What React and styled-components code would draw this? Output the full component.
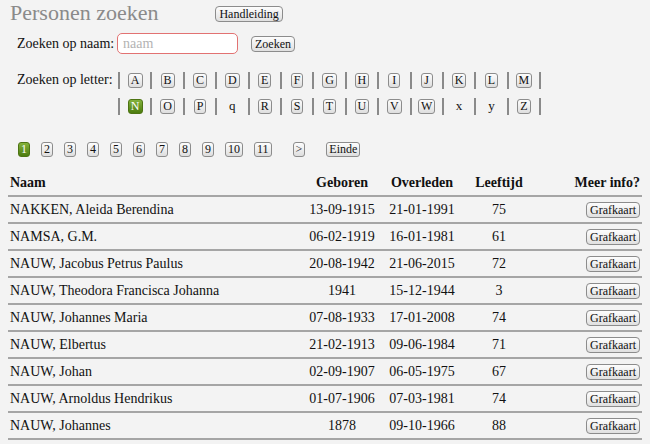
import styled, { createGlobalStyle, css } from "styled-components";

const GlobalStyle = createGlobalStyle`
  html, body {
    margin: 0;
    overflow: hidden;
  }
  body {
    padding: 0 8px;
    background: #f3f3f3;
    color: #111;
    font-family: "Liberation Serif", "Times New Roman", serif;
    font-size: 14px;
  }
`;

const letters1 = ["A", "B", "C", "D", "E", "F", "G", "H", "I", "J", "K", "L", "M"];
const letters2 = ["N", "O", "P", "q", "R", "S", "T", "U", "V", "W", "x", "y", "Z"];
const empty = ["q", "x", "y"];

const people = [
  ["NAKKEN, Aleida Berendina", "13-09-1915", "21-01-1991", "75"],
  ["NAMSA, G.M.", "06-02-1919", "16-01-1981", "61"],
  ["NAUW, Jacobus Petrus Paulus", "20-08-1942", "21-06-2015", "72"],
  ["NAUW, Theodora Francisca Johanna", "1941", "15-12-1944", "3"],
  ["NAUW, Johannes Maria", "07-08-1933", "17-01-2008", "74"],
  ["NAUW, Elbertus", "21-02-1913", "09-06-1984", "71"],
  ["NAUW, Johan", "02-09-1907", "06-05-1975", "67"],
  ["NAUW, Arnoldus Hendrikus", "01-07-1906", "07-03-1981", "74"],
  ["NAUW, Johannes", "1878", "09-10-1966", "88"],
];

export default function App() {
  return (
    <>
      <GlobalStyle />
      <TitleBar>
        <Title>Personen zoeken</Title>
        <Knop $top={6}>Handleiding</Knop>
      </TitleBar>

      <Zoekform>
        <Label>Zoeken op naam:</Label>
        <NameRow>
          <NaamInput placeholder="naam" />
          <Knop>Zoeken</Knop>
        </NameRow>

        <Label $tall>Zoeken op letter:</Label>
        <LetterRows>
          {[letters1, letters2].map((row, i) => (
            <LetterRow key={i}>
              {row.map((l) => (
                <Slot key={l}>
                  <Sep />
                  <Cell>
                    {empty.includes(l) ? (
                      <Plain>{l}</Plain>
                    ) : (
                      <Mini $active={l === "N"}>{l}</Mini>
                    )}
                  </Cell>
                </Slot>
              ))}
              <Sep />
            </LetterRow>
          ))}
        </LetterRows>
      </Zoekform>

      <Pages>
        {["1", "2", "3", "4", "5", "6", "7", "8", "9", "10", "11"].map((p) => (
          <Mini key={p} $active={p === "1"}>
            {p}
          </Mini>
        ))}
        <Mini $wide>&gt;</Mini>
        <Mini $wide>Einde</Mini>
      </Pages>

      <Tabel>
        <colgroup>
          <col style={{ width: 299 }} />
          <col style={{ width: 70 }} />
          <col style={{ width: 90 }} />
          <col style={{ width: 64 }} />
          <col />
        </colgroup>
        <thead>
          <tr>
            <Th>Naam</Th>
            <Th $align="center">Geboren</Th>
            <Th $align="center">Overleden</Th>
            <Th $align="center">Leeftijd</Th>
            <Th $align="right">Meer info?</Th>
          </tr>
        </thead>
        <tbody>
          {people.map(([naam, geb, ovl, lft]) => (
            <tr key={naam}>
              <Td>{naam}</Td>
              <Td $align="center">{geb}</Td>
              <Td $align="center">{ovl}</Td>
              <Td $align="center">{lft}</Td>
              <Td $align="right">
                <Knop>Grafkaart</Knop>
              </Td>
            </tr>
          ))}
        </tbody>
      </Tabel>
    </>
  );
}

const TitleBar = styled.div`
  display: flex;
  align-items: flex-start;
  gap: 57px;
  height: 22px;
`;

const Title = styled.h1`
  margin: 0 0 0 2px;
  font-size: 22px;
  line-height: 25px;
  font-weight: normal;
  color: #8a8a8a;
`;

const Knop = styled.button`
  margin-top: ${(p) => p.$top || 0}px;
  height: 16px;
  padding: 0 3px;
  font-family: "Liberation Serif", "Times New Roman", serif;
  font-size: 12px;
  line-height: 14px;
  color: #111;
  background: linear-gradient(#fdfdfd, #e0e0e0);
  border: 1px solid #8c8c8c;
  border-radius: 4px;
`;

const Zoekform = styled.div`
  display: grid;
  grid-template-columns: 100px auto;
  row-gap: 13px;
  margin-top: 11px;
  padding-left: 9px;
`;

const Label = styled.div`
  line-height: ${(p) => (p.$tall ? 26 : 21)}px;
`;

const NameRow = styled.div`
  display: flex;
  align-items: center;
  gap: 13px;
  height: 21px;
`;

const NaamInput = styled.input`
  box-sizing: border-box;
  width: 121px;
  height: 21px;
  padding: 0 5px;
  font-family: "Liberation Serif", "Times New Roman", serif;
  font-size: 14px;
  background: #fff;
  border: 1.5px solid #e27272;
  border-radius: 5px;
  outline: none;
  &::placeholder {
    color: #b3b3b3;
  }
`;

const LetterRows = styled.div`
  display: flex;
  flex-direction: column;
`;

const LetterRow = styled.div`
  display: flex;
  align-items: center;
  height: 26px;
  margin-left: 1px;
`;

const Slot = styled.div`
  display: flex;
  align-items: center;
`;

const Sep = styled.span`
  width: 2px;
  height: 17px;
  background: #8a8a8a;
`;

const Cell = styled.span`
  display: flex;
  justify-content: center;
  width: 30.4px;
`;

const Plain = styled.span`
  font-size: 13px;
  color: #111;
`;

const Mini = styled.span`
  display: inline-flex;
  align-items: center;
  justify-content: center;
  box-sizing: border-box;
  min-width: 12px;
  height: 15px;
  padding: 0 2px;
  font-size: 12px;
  line-height: 13px;
  color: #111;
  background: linear-gradient(#fdfdfd, #dedede);
  border: 1px solid #8c8c8c;
  border-radius: 3px;
  ${(p) =>
    p.$wide &&
    css`
      margin-left: 10px;
    `}
  ${(p) =>
    p.$active &&
    css`
      color: #fff;
      background: linear-gradient(#84b23c, #4c7c0e);
      border-color: #4d7413;
    `}
`;

const Pages = styled.div`
  display: flex;
  align-items: center;
  gap: 11px;
  margin: 22px 0 0 10px;
  height: 16px;
`;

const Tabel = styled.table`
  width: 100%;
  margin-top: 13px;
  border-collapse: collapse;
  table-layout: fixed;
`;

const Th = styled.th`
  height: 25px;
  padding: 0 2px;
  text-align: ${(p) => p.$align || "left"};
  font-size: 14px;
  border-bottom: 2px solid #a5a5a5;
`;

const Td = styled.td`
  height: 25px;
  padding: 0 2px;
  text-align: ${(p) => p.$align || "left"};
  font-size: 14px;
  white-space: nowrap;
  border-bottom: 2px solid #a5a5a5;
`;
